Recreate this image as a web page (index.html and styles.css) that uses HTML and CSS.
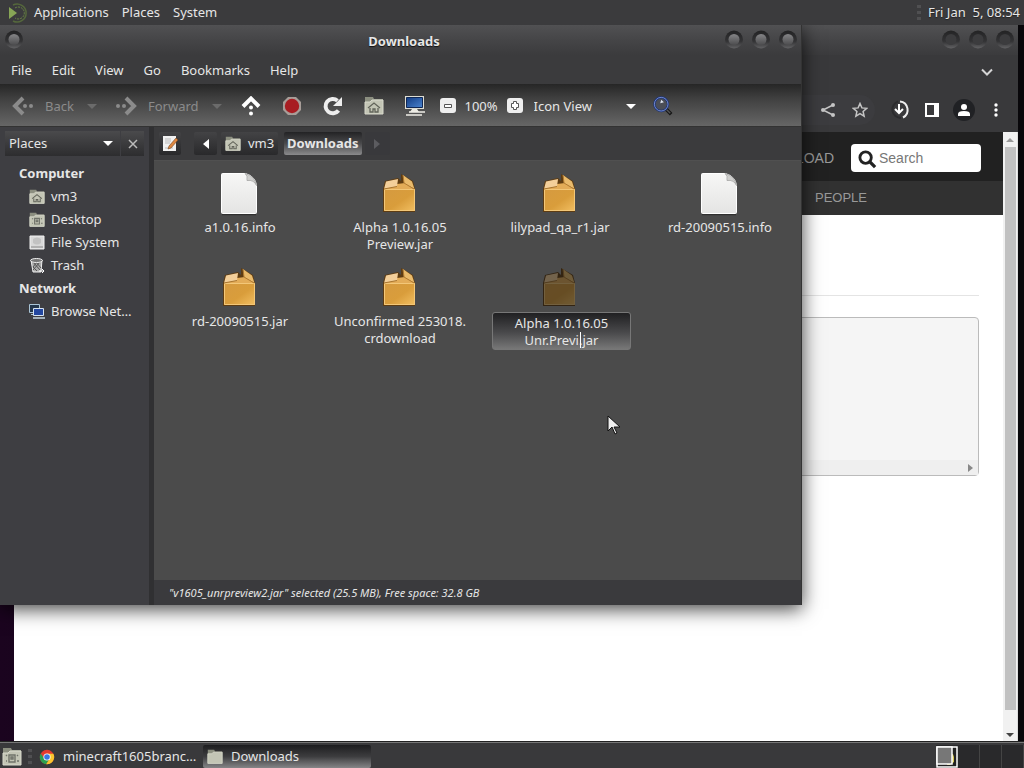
FILE: index.html
```html
<!DOCTYPE html>
<html lang="en">
<head>
<meta charset="utf-8">
<title>Downloads</title>
<link rel="stylesheet" href="styles.css">
</head>
<body>
<svg class="defs" aria-hidden="true">
  <defs>
    <linearGradient id="boxFill" x1="0" y1="0" x2="1" y2="1"><stop offset="0" stop-color="#d59a40"/><stop offset=".55" stop-color="#d99d3b"/><stop offset="1" stop-color="#f2bf62"/></linearGradient>
    <linearGradient id="docFill" x1="0" y1="0" x2="0" y2="1"><stop offset="0" stop-color="#f7f7f6"/><stop offset="1" stop-color="#e4e4e3"/></linearGradient>
    <linearGradient id="screenFill" x1="0" y1="0" x2="1" y2="1"><stop offset="0" stop-color="#123c84"/><stop offset="1" stop-color="#4b84cf"/></linearGradient>
    <linearGradient id="ringFill" x1="0" y1="0" x2="0" y2="1"><stop offset="0" stop-color="#232324"/><stop offset=".6" stop-color="#333335"/><stop offset="1" stop-color="#626264"/></linearGradient>
    <linearGradient id="litFill" x1="0" y1="0" x2="0" y2="1"><stop offset="0" stop-color="#858587"/><stop offset="1" stop-color="#4c4c4e"/></linearGradient>
    <symbol id="box" viewBox="0 0 48 48">
      <path d="M7 18L9 10 22 7l3 3V3l12 7 2 8v23H7z" fill="#5e3c12"/>
      <path d="M9 18l12-5 8-1 9 6z" fill="#e3ac58"/>
      <path d="M8 18h31v22H8z" fill="url(#boxFill)"/>
      <path d="M8.500 18.500h30v21h-30z" fill="none" stroke="#f3c778"/>
      <path d="M10 10.500L22 8l-1 7.500L8 18z" fill="#f3cf9a"/>
      <path d="M21 15.500L8 18" stroke="#a8752f"/>
      <path d="M27 4l9 6.500 2.500 7.500L28 12z" fill="#eabb6c"/>
      <path d="M27 4l1 8 10 6" fill="none" stroke="#b27c32"/>
    </symbol>
    <symbol id="doc" viewBox="0 0 48 48">
      <path d="M6 43.500h34" stroke="#303030" stroke-width="1.500"/>
      <path d="M5.500 3.500q0-1 1-1h23q10 3 11 12v27q0 1-1 1h-33q-1 0-1-1z" fill="url(#docFill)" stroke="#fff"/>
      <path d="M29 2.500q3 2 2 7 7-1 9.500 5Q39 5 29 2.500z" fill="#cfcfcd" stroke="#a5a5a3" stroke-width=".8"/>
    </symbol>
    <symbol id="folder" viewBox="0 0 20 20">
      <path d="M1 1h8l1 2h9v14H1z" fill="#8c8f80"/>
      <path d="M1 6h5l2-2h11v14H1z" fill="#c3c5b5" stroke="#d9dacd"/>
    </symbol>
    <symbol id="home" viewBox="0 0 20 20">
      <use href="#folder"/>
      <path d="M4 12l6-5 6 5M6 12v4h3v-3h2v3h3v-4" fill="none" stroke="#62645a" stroke-width="1.300"/>
    </symbol>
    <symbol id="desk" viewBox="0 0 20 20">
      <use href="#folder"/>
      <path d="M7 8h6v7H7zM9 10h2v2H9zM4 8l1 1M15 8l1 1M4 14h1M15 14h2" fill="none" stroke="#70736a" stroke-width="1.400"/>
    </symbol>
    <symbol id="arrow" viewBox="0 0 22 20">
      <path d="M11 2L3 10l8 8" fill="none" stroke="currentColor" stroke-width="4"/>
      <circle cx="13" cy="10" r="2" fill="currentColor"/><circle cx="19" cy="10" r="2" fill="currentColor"/>
    </symbol>
    <symbol id="knob" viewBox="0 0 20 20">
      <circle cx="10" cy="10.500" r="9" fill="url(#ringFill)"/><circle cx="10" cy="10.500" r="5.500" fill="#3c3c3e"/>
    </symbol>
    <symbol id="knobLit" viewBox="0 0 20 20">
      <circle cx="10" cy="10.500" r="9" fill="url(#ringFill)"/><circle cx="10" cy="10.500" r="5.500" fill="url(#litFill)"/>
    </symbol>
  </defs>
</svg>

<header class="panel panel-top">
  <svg class="logo" viewBox="0 0 20 20"><path d="M2 4l8 6-8 6z" fill="#87a556"/><path d="M6 2a9 9 0 1 1 0 16" fill="none" stroke="#55683c" stroke-width="1.500"/><path d="M8 5a6 6 0 1 1 0 10" fill="none" stroke="#6d8847" stroke-dasharray="2 1"/></svg>
  <nav class="panel-menu"><button>Applications</button><button>Places</button><button>System</button></nav>
  <span class="grip clock-grip"></span>
  <time class="clock">Fri Jan&nbsp; 5, 08:54</time>
</header>

<main class="desktop">
  <section class="window browser" aria-label="Browser">
    <div class="titlebar browser-title">
      <button class="knob" aria-label="Minimize"><svg><use href="#knob"/></svg></button>
      <button class="knob" aria-label="Maximize"><svg><use href="#knob"/></svg></button>
      <button class="knob" aria-label="Close window"><svg><use href="#knob"/></svg></button>
    </div>
    <div class="tabstrip"><button aria-label="Search tabs"><svg width="12" height="12" viewBox="0 0 12 12"><path d="M1 3.500l5 5 5-5" fill="none" stroke="#d5d5d5" stroke-width="2"/></svg></button></div>
    <div class="browser-tools">
      <div class="omnibox">
        <button aria-label="Share"><svg viewBox="0 0 16 16"><path d="M13 3L3 8l10 5" fill="none" stroke="#c5c5c5" stroke-width="1.500"/><g fill="#c5c5c5"><circle cx="13" cy="3" r="2"/><circle cx="3" cy="8" r="2"/><circle cx="13" cy="13" r="2"/></g></svg></button>
        <button aria-label="Bookmark"><svg viewBox="0 0 16 16"><path d="M8 1.500l1.900 4.400 4.800.4-3.600 3.200 1 4.700L8 11.700l-4.100 2.500 1-4.700L1.300 6.300l4.800-.4z" fill="none" stroke="#c5c5c5" stroke-width="1.500"/></svg></button>
      </div>
      <button aria-label="Downloads"><svg viewBox="0 0 20 20"><path d="M9 4v9M5 9l4 4 4-4" fill="none" stroke="#fff" stroke-width="2"/><path d="M10 1.500a8.500 8.500 0 0 1 3 16" fill="none" stroke="#eee" stroke-width="2"/><path d="M8 1.500a8.500 8.500 0 0 0 3 16.500" fill="none" stroke="#2c2c2e" stroke-width="2"/></svg></button>
      <button aria-label="Side panel"><svg viewBox="0 0 20 20"><path d="M3 3h14v14H3z" fill="#fff"/><path d="M5 5h7v10H5z" fill="#39393b"/></svg></button>
      <button aria-label="Profile"><svg class="profile" viewBox="0 0 22 22"><circle cx="11" cy="11" r="11" fill="#202124"/><circle cx="11" cy="8" r="3" fill="#fff"/><path d="M5 17v-2q0-3 6-3t6 3v2z" fill="#fff"/></svg></button>
      <button aria-label="Menu"><svg viewBox="0 0 20 20" fill="#fff"><circle cx="10" cy="5" r="1.700"/><circle cx="10" cy="10" r="1.700"/><circle cx="10" cy="15" r="1.700"/></svg></button>
    </div>
    <div class="viewport">
      <div class="page">
        <div class="site-nav"><a href="#">DOWNLOAD</a>
          <label class="site-search"><svg viewBox="0 0 20 20"><circle cx="8" cy="8" r="6" fill="none" stroke="#222" stroke-width="3"/><path d="M12 12l6 6" stroke="#222" stroke-width="3.500"/></svg><input type="text" placeholder="Search" aria-label="Search"></label>
        </div>
        <div class="site-sub"><a href="#">PEOPLE</a></div>
        <div class="article"><hr><div class="codebox"><div class="codebar"><svg width="6" height="8" viewBox="0 0 6 8"><path d="M0 0l5 4-5 4z" fill="#888"/></svg></div></div></div>
      </div>
      <div class="scrollbar"><span class="tri-up"></span><span class="thumb"></span><span class="tri-down"></span></div>
    </div>
  </section>

  <section class="window files" aria-label="Downloads">
    <div class="titlebar">
      <button class="knob" aria-label="Window menu"><svg><use href="#knobLit"/></svg></button>
      <h1>Downloads</h1>
      <button class="knob" aria-label="Minimize"><svg><use href="#knobLit"/></svg></button>
      <button class="knob" aria-label="Maximize"><svg><use href="#knobLit"/></svg></button>
      <button class="knob" aria-label="Close window"><svg><use href="#knobLit"/></svg></button>
    </div>
    <nav class="menubar"><button>File</button><button>Edit</button><button>View</button><button>Go</button><button>Bookmarks</button><button>Help</button></nav>
    <div class="toolbar">
      <button class="step" disabled><svg class="step-icon"><use href="#arrow"/></svg>Back</button>
      <button class="drop" aria-label="Back history" disabled><span class="caret-down dim"></span></button>
      <button class="step" disabled><svg class="step-icon flip"><use href="#arrow"/></svg>Forward</button>
      <button class="drop" aria-label="Forward history" disabled><span class="caret-down dim"></span></button>
      <button class="tool" aria-label="Up"><svg viewBox="0 0 20 20"><path d="M2 10.500l8-8 8 8" fill="none" stroke="#fff" stroke-width="4"/><circle cx="10" cy="11.500" r="2" fill="#fff"/><circle cx="10" cy="17.500" r="2" fill="#fff"/></svg></button>
      <button class="tool" aria-label="Stop"><svg viewBox="0 0 20 20"><path d="M6 1h8l5 5v8l-5 5H6l-5-5V6z" fill="#a79d98"/><circle cx="10" cy="10" r="7.200" fill="#a81d22"/></svg></button>
      <button class="tool" aria-label="Reload"><svg viewBox="0 0 20 20"><path d="M15.500 14.500a7.200 7.200 0 1 1-1-9.800" fill="none" stroke="#eee" stroke-width="4"/><path d="M19 1v9h-9z" fill="#eee"/></svg></button>
      <button class="tool" aria-label="Home"><svg><use href="#home"/></svg></button>
      <button class="tool" aria-label="Computer"><svg viewBox="0 0 20 20"><path d="M0 0h19v13H0z" fill="#deddd3"/><path d="M1.500 1.500h16v10h-16z" fill="url(#screenFill)" stroke="#102855"/><path d="M7 13h5l2 3H5z" fill="#e9e8e0"/><path d="M1 19h16M4 16h16" stroke="#efeee8" stroke-width="1.500"/></svg></button>
      <button class="zoom" aria-label="Zoom out"><svg viewBox="0 0 16 16"><rect width="16" height="15" rx="3" fill="#eee"/><path d="M4.500 6.500h7v3h-7z" fill="#fff" stroke="#555"/></svg></button>
      <output>100%</output>
      <button class="zoom" aria-label="Zoom in"><svg viewBox="0 0 16 16"><rect width="16" height="15" rx="3" fill="#eee"/><path d="M6.500 3.500h3v2h2v4h-2v2h-3v-2h-2v-4h2z" fill="#fff" stroke="#555"/></svg></button>
      <label class="view-picker"><select aria-label="View"><option>Icon View</option></select><span class="caret-down"></span></label>
      <button class="tool" aria-label="Search"><svg viewBox="0 0 22 22"><path d="M14 14l6 6" stroke="#151515" stroke-width="4"/><path d="M14 14l5 5" stroke="#555" stroke-width="1.500"/><circle cx="9" cy="9" r="7.500" fill="#4b4e57" stroke="#1c3374" stroke-width="2.500"/><circle cx="9" cy="9" r="7.500" fill="none" stroke="#7890d6"/><path d="M9 4l3 3-4 1z" fill="#dce3ee"/></svg></button>
    </div>
    <div class="body">
      <aside class="sidebar">
        <div class="side-head"><button class="side-pick">Places<span class="caret-down"></span></button><button class="side-close" aria-label="Close sidebar"><svg width="10" height="10" viewBox="0 0 10 10"><path d="M1 1l8 8M9 1L1 9" stroke="#bbb" stroke-width="1.500"/></svg></button></div>
        <nav class="places">
          <h2>Computer</h2>
          <a href="#"><svg><use href="#home"/></svg>vm3</a>
          <a href="#"><svg><use href="#desk"/></svg>Desktop</a>
          <a href="#"><svg viewBox="0 0 16 16"><path d="M1 1h14v13H1z" fill="#d8d8d8" stroke="#f0f0f0"/><path d="M4 4q4-3 8 0v4q-4 3-8 0z" fill="#c2c2c2"/><path d="M2 12h12" stroke="#888"/></svg>File System</a>
          <a href="#"><svg viewBox="0 0 16 16"><path d="M2 2h11l-1 12H4z" fill="#aaa" stroke="#eee"/><path d="M4 4l7 8M7 4l5 6M11 4l-7 8M8 4L4 9M4 9l4 4" stroke="#555"/><ellipse cx="7.500" cy="2.500" rx="6" ry="2" fill="#777" stroke="#eee"/><path d="M10 13h5M13 11l2 2-2 2" stroke="#fff" fill="none"/></svg>Trash</a>
          <h2>Network</h2>
          <a href="#"><svg viewBox="0 0 16 16"><path d="M.500.500h10v8H.500zM2 10.500h3" fill="#23364b" stroke="#a9c4d6"/><path d="M4.500 4.500h10v7h-10z" fill="#2347a0" stroke="#d6e3ef"/><path d="M4 14h12" stroke="#c6d7e2" stroke-width="1.500"/></svg>Browse Net…</a>
        </nav>
      </aside>
      <div class="content">
        <div class="pathbar">
          <button class="path-btn edit" aria-label="Edit location"><svg viewBox="0 0 16 16"><path d="M1 0h13v15H1z" fill="#f2f2f2"/><path d="M3 3h6M3 5h6M3 7h5M3 12h8" stroke="#bbb"/><path d="M14 2l2 2-7 8-3 1 1-3z" fill="#df8741" stroke="#754622" stroke-width=".6"/></svg></button>
          <button class="path-btn prev" aria-label="Scroll path left"><svg width="6" height="10" viewBox="0 0 6 10"><path d="M6 0v10L0 5z" fill="#fff"/></svg></button>
          <button class="path-btn crumb"><svg><use href="#home"/></svg>vm3</button>
          <button class="path-btn current">Downloads</button>
          <button class="path-btn next" aria-label="Scroll path right" disabled><svg width="6" height="10" viewBox="0 0 6 10"><path d="M0 0v10l6-5z" fill="#5c5c60"/></svg></button>
        </div>
        <ul class="grid">
          <li><svg><use href="#doc"/></svg><span>a1.0.16.info</span></li>
          <li><svg><use href="#box"/></svg><span>Alpha 1.0.16.05<br>Preview.jar</span></li>
          <li><svg><use href="#box"/></svg><span>lilypad_qa_r1.jar</span></li>
          <li><svg><use href="#doc"/></svg><span>rd-20090515.info</span></li>
          <li><svg><use href="#box"/></svg><span>rd-20090515.jar</span></li>
          <li><svg><use href="#box"/></svg><span>Unconfirmed 253018.<br>crdownload</span></li>
          <li class="renaming"><svg><use href="#box"/></svg><div class="rename"><textarea rows="2" aria-label="File name" spellcheck="false">Alpha 1.0.16.05
Unr.Previ.jar</textarea><span class="text-caret"></span></div></li>
        </ul>
        <footer class="status">"v1605_unrpreview2.jar" selected (25.5 MB), Free space: 32.8 GB</footer>
      </div>
    </div>
  </section>
  <svg class="pointer" viewBox="0 0 14 20"><path d="M1 1v15l4-4 3 7 2-1-3-6h6z" fill="#eee" stroke="#111"/></svg>
</main>

<footer class="panel panel-bottom">
  <button class="show-desktop" aria-label="Show desktop"><svg><use href="#desk"/></svg></button>
  <span class="grip"></span>
  <button class="task"><svg viewBox="0 0 20 20"><circle cx="10" cy="10" r="9" fill="#e33b2e"/><path d="M2.200 5.500A9 9 0 0 0 9 19l4.300-7.200H6.500z" fill="#2ca14f"/><path d="M10 6h8a9 9 0 0 1-9 13l4.800-7.500z" fill="#fbc52d"/><circle cx="10" cy="10" r="4.500" fill="#fff"/><circle cx="10" cy="10" r="3.500" fill="#3a78e0"/></svg><span>minecraft1605branc…</span></button>
  <button class="task active"><svg><use href="#folder"/></svg><span>Downloads</span></button>
  <div class="workspaces">
    <button class="ws on" aria-label="Workspace 1"><svg viewBox="0 0 22 22"><path d="M1 1h20v20H1z" fill="#222" stroke="#fff" stroke-width="1.500"/><path d="M14 8h3l1 3v5l-4 3h-3z" fill="#d5c64f"/><path d="M1 1h15v17H1z" fill="#777" stroke="#fff" stroke-width="1.500"/></svg></button>
    <button class="ws" aria-label="Workspace 2"></button><button class="ws" aria-label="Workspace 3"></button><button class="ws" aria-label="Workspace 4"></button>
  </div>
</footer>
</body>
</html>
```
FILE: styles.css
```css
* { box-sizing: border-box; }
html, body { height: 100%; margin: 0; }
body { display: flex; flex-direction: column; overflow: hidden; background: #08060a; color: #e6e6e6; font: 13px/17px "Noto Sans", sans-serif; }
button, input, textarea, select { font: inherit; color: inherit; background: none; border: 0; margin: 0; padding: 0; outline: 0; }
button { display: flex; align-items: center; white-space: nowrap; }
a { color: inherit; text-decoration: none; }
svg { display: block; flex: none; }
.defs { position: absolute; width: 0; height: 0; }

.panel { display: flex; align-items: center; flex: none; background: #3b3b3d; text-shadow: 0 1px 1px #222; }
.panel-top { height: 25px; padding: 0 4px 0 7px; }
.logo { width: 20px; height: 20px; }
.panel-menu { display: flex; gap: 13px; margin-left: 7px; flex: 1; }
.grip { width: 4px; height: 16px; background: repeating-linear-gradient(#505052 0 3px, #3b3b3d 3px 6px); }
.clock-grip { margin-right: 7px; }

.desktop { position: relative; flex: 1; min-height: 0; overflow: hidden; background: linear-gradient(90deg, #1b041f, #0a0710 50%, #08070a); }
.window { position: absolute; display: flex; flex-direction: column; }
.browser { inset: 0 6px 0 14px; background: #39393b; }
.files { inset: 0 222px 137px 0; background: #3b3b3d; box-shadow: 0 4px 18px rgba(0, 0, 0, .75); border-right: 1px solid #333; }

.titlebar { display: flex; align-items: center; flex: none; height: 30px; padding: 0 3px 0 4px; gap: 7px; background: linear-gradient(#515153, #454547 50%, #3b3b3d); }
.titlebar h1 { flex: 1; margin: 0; padding: 2px 0 0 60px; text-align: center; font-size: 13px; line-height: 17px; text-shadow: 0 1px 1px #111; }
.knob { width: 20px; height: 20px; margin-top: -3px; }
.knob svg { width: 20px; height: 20px; }
.browser-title { justify-content: flex-end; }

.tabstrip { display: flex; justify-content: flex-end; align-items: center; height: 34px; padding-right: 25px; flex: none; }
.browser-tools { display: flex; justify-content: flex-end; align-items: center; height: 43px; flex: none; padding: 0 11px 2px 0; gap: 10px; }
.browser-tools button { width: 22px; height: 22px; justify-content: center; }
.browser-tools svg { width: 20px; height: 20px; }
.browser-tools .profile { width: 22px; height: 22px; }
.omnibox { display: flex; align-items: center; justify-content: flex-end; gap: 10px; flex: 1; height: 30px; margin: 0 4px 0 80px; padding-right: 4px; border-radius: 15px; background: #3c3c3f; }
.omnibox button svg { width: 16px; height: 16px; }
.viewport { display: flex; flex: 1; min-height: 0; background: #fff; }
.page { flex: 1; font: 14px/18px "Liberation Sans", Arial, sans-serif; color: #999; }
.site-nav { display: flex; justify-content: flex-end; align-items: center; height: 49px; padding: 3px 22px 0 0; gap: 17px; background: #212121; }
.site-search { display: flex; align-items: center; gap: 2px; width: 130px; height: 28px; padding-left: 7px; border-radius: 4px; background: #fff; }
.site-search svg { width: 19px; height: 19px; margin-top: 3px; }
.site-search input { flex: 1; min-width: 0; color: #666; }
.site-search input::placeholder { color: #777; opacity: 1; }
.site-sub { display: flex; justify-content: flex-end; align-items: center; height: 34px; padding-right: 136px; font-size: 13px; background: #313131; }
.article { padding: 80px 24px 0 20px; }
.article hr { height: 1px; margin: 0 0 21px; border: 0; background: #e4e4e4; }
.codebox { display: flex; align-items: flex-end; height: 159px; border: 1px solid #bbb; border-radius: 4px; background: #f5f5f5; }
.codebar { display: flex; justify-content: flex-end; align-items: center; flex: 1; height: 15px; padding-right: 4px; background: #efefef; }
.scrollbar { display: flex; flex-direction: column; align-items: center; width: 15px; padding: 6px 0 5px; background: #f1f1f1; border-right: 1px solid #ddd; }
.tri-up, .tri-down { border: 4px solid transparent; }
.tri-up { border-top: 0; border-bottom-color: #999; margin-bottom: 5px; }
.tri-down { border-bottom: 0; border-top-color: #444; margin-top: 23px; }
.thumb { flex: 1; width: 11px; background: #c1c1c1; }

.menubar { display: flex; gap: 20px; height: 29px; padding: 2px 11px 0; flex: none; }
.toolbar { display: flex; align-items: center; height: 43px; padding: 2px 0 0 12px; flex: none; background: linear-gradient(#262626, #404040 35%, #666); border-bottom: 1px solid #333; }
.step { gap: 11px; padding-right: 5px; color: #8b8b8b; }
.step-icon { width: 22px; height: 20px; }
.flip { transform: scaleX(-1); }
.drop { width: 27px; justify-content: center; }
.drop + .step { margin-left: 9px; }
.caret-down { flex: none; border: 5px solid transparent; border-top-color: #fff; border-bottom: 0; }
.caret-down.dim { border-top-color: #6b6b6b; }
.tool { width: 41px; justify-content: center; }
.tool svg { width: 20px; height: 20px; }
.zoom { margin: 0 4px; }
.zoom svg { width: 16px; height: 16px; }
.toolbar output { width: 43px; text-align: center; }
.view-picker { display: flex; align-items: center; width: 102px; margin: 0 7px; }
.view-picker select { appearance: none; flex: 1; }

.body { display: flex; flex: 1; min-height: 0; }
.sidebar { width: 154px; flex: none; padding: 4px 5px 0; border-right: 5px solid #303032; background: #3e3e42; }
.side-head { display: flex; gap: 1px; height: 25px; }
.side-pick, .side-close { background: linear-gradient(#4a4a4c, #2d2d2f); }
.side-pick { flex: 1; justify-content: space-between; padding: 0 7px 0 4px; }
.side-close { width: 23px; justify-content: center; }
.places { padding: 6px 0 0 14px; }
.places h2 { margin: 0; font-size: 13px; line-height: 23px; }
.places a { display: flex; align-items: center; gap: 6px; height: 23px; padding-left: 10px; white-space: nowrap; }
.places svg { width: 16px; height: 16px; }

.content { display: flex; flex-direction: column; flex: 1; min-width: 0; }
.pathbar { display: flex; align-items: center; height: 33px; padding: 0 5px; flex: none; }
.path-btn { height: 23px; justify-content: center; border-radius: 2px; background: linear-gradient(#434345, #29292b); }
.edit { width: 22px; margin-right: 13px; }
.edit svg { width: 16px; height: 16px; }
.prev { width: 23px; margin-right: 4px; }
.crumb { width: 57px; gap: 7px; margin-right: 6px; }
.crumb svg { width: 16px; height: 16px; }
.current { padding: 0 3px; font-weight: bold; background: linear-gradient(#232325, #4a4a4c 50%, #8a8a8c); }
.next { width: 25px; margin-left: 3px; background: #39393c; }
.grid { display: grid; grid-template-columns: repeat(auto-fill, 160px); align-content: start; gap: 12px 0; flex: 1; min-height: 0; margin: 0; padding: 10px 0 0 6px; list-style: none; background: #4b4b4b; border-top: 1px solid #505050; text-align: center; }
.grid li { display: flex; flex-direction: column; align-items: center; }
.grid svg { width: 48px; height: 48px; }
.renaming svg { opacity: .85; filter: brightness(.5); }
.rename { position: relative; width: 139px; margin: -1px 0 0 3px; }
.rename textarea { display: block; width: 100%; height: 38px; padding: 2px 0 0; border: 1px solid #777; border-radius: 3px; resize: none; overflow: hidden; text-align: center; background: linear-gradient(#202022, #4a4a4c 55%, #777); }
.text-caret { position: absolute; left: 88px; top: 20px; width: 1px; height: 16px; background: #fff; }
.status { flex: none; height: 25px; padding: 4px 15px; font-size: 11px; line-height: 17px; font-style: italic; background: #3a3a3d; }
.pointer { position: absolute; left: 607px; top: 390px; width: 14px; height: 20px; }

.panel-bottom { height: 26px; padding: 2px 0 0 2px; background: #39393b; border-top: 1px solid #777; box-shadow: 0 -1px #222; position: relative; }
.show-desktop svg { width: 20px; height: 20px; }
.panel-bottom .grip { margin-left: 6px; }
.task { width: 164px; gap: 8px; padding-left: 7px; height: 23px; }
.task svg { width: 16px; height: 16px; }
.task.active { width: 168px; padding-left: 4px; margin-left: 7px; border-radius: 2px; background: linear-gradient(#1d1d1f, #3d3d3f 50%, #858587); }
.workspaces { display: flex; height: 100%; margin-left: auto; }
.ws { width: 22px; border-right: 1px solid #444; background: #29292b; }
.ws.on { border: 0; }
.ws svg { width: 22px; height: 22px; }
```
